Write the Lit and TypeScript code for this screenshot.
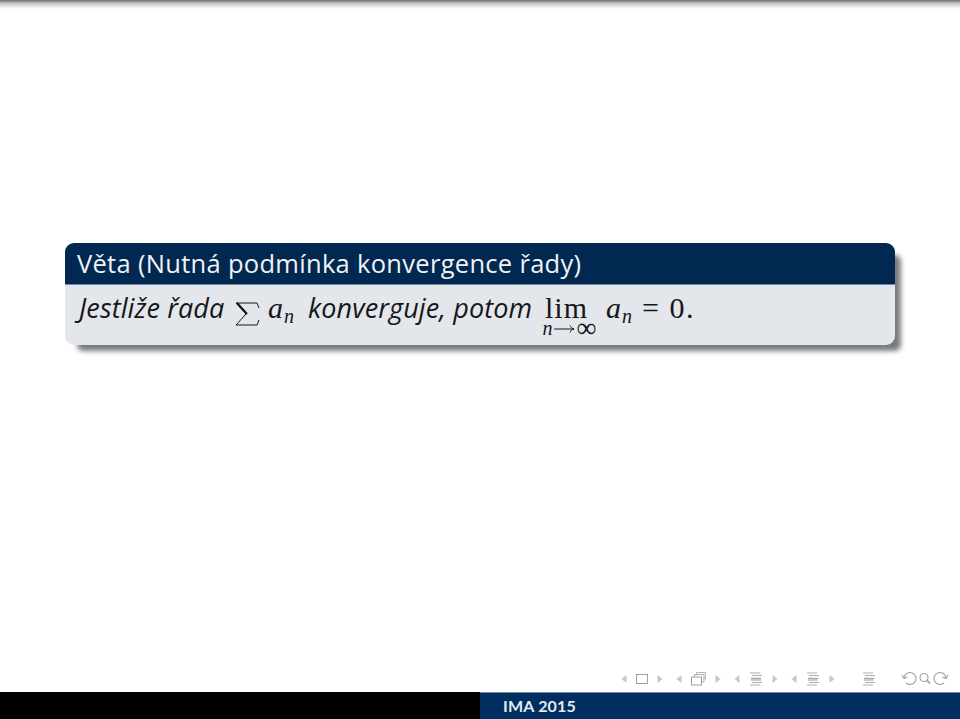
import { LitElement, html, css, svg } from "lit";
import { customElement } from "lit/decorators.js";

const tri = (left: boolean) =>
  svg`<svg class="tri" viewBox="0 0 6 10">${left ? svg`<path d="M5.500 1 .5 5l5 4z"/>` : svg`<path d="M.5 1l5 4-5 4z"/>`}</svg>`;

const lines = svg`<svg class="ico" viewBox="0 0 14 14" fill="none" stroke="#a9adb4" stroke-width="1">
  <path d="M1 1h10M3 3.500h10"/><path d="M2 6.300h10M2 8h10" stroke="#8f949c"/><path d="M3 10.500h10M1 13h10"/>
</svg>`;

const frame = svg`<svg class="fr" viewBox="0 0 12 10" fill="none" stroke="#9a9ea6" stroke-width="1"><rect x=".5" y=".5" width="11" height="9"/></svg>`;

const stack = svg`<svg class="stack" viewBox="0 0 15 14" fill="none" stroke="#9a9ea6" stroke-width="1">
  <path d="M5.500 2.500V.5h9v6.500h-2" stroke="#b5b9bf"/><path d="M3.500 5V2.500h9.500v7.500h-2.500" stroke="#a9adb4"/><rect x=".5" y="5" width="10" height="8" fill="#fff"/>
</svg>`;

const group = (icon: unknown) => html`<span class="grp">${tri(true)}${icon}${tri(false)}</span>`;

@customElement("app-root")
export class AppRoot extends LitElement {
  static styles = css`
    :host { display: block; width: 960px; height: 719px; background: #fff; overflow: hidden; }
    .page { display: flex; flex-direction: column; height: 719px; }
    .shade { height: 9px; flex: none; background: linear-gradient(#6d6f72, #c9cacb 40%, #fff); }
    .main { flex: 1; padding: 234px 65px 0 65px; }
    .block { height: 102px; border-radius: 9px; display: flex; flex-direction: column; background: #e3e6ea; box-shadow: 9px 9px 5px -3px rgba(40, 42, 48, 0.62); }
    .head {
      height: 42px; flex: none; box-sizing: border-box; padding: 5px 0 0 12px; background: #002850; color: #f0f3f6;
      border-radius: 9px 9px 0 0; border-bottom: 1px solid #6f8aa5;
      font: 25.500px/30px "Open Sans", "Noto Sans", sans-serif; letter-spacing: 0.3px; white-space: nowrap;
    }
    .body { display: flex; align-items: baseline; padding: 6px 0 0 12px; height: 50px; box-sizing: border-box; color: #15171a; white-space: nowrap; }
    .t { font: italic 27px/34px "Open Sans", "Noto Sans", sans-serif; }
    .t1 { width: 145px; padding-left: 2px; letter-spacing: 0.1px; }
    .t2 { width: 223px; letter-spacing: 0.1px; }
    .m { font: italic 30px/34px "Liberation Serif", serif; }
    .m sub { font-size: 20px; line-height: 0; vertical-align: -5px; margin-left: 1px; }
    .sum { width: 25px; height: 24px; margin: 0 8px 0 11px; align-self: center; position: relative; top: 1px; }
    .an1 { width: 27px; margin-right: 13px; }
    .lim { display: inline-flex; flex-direction: column; align-items: center; width: 57px; margin: 0 8px 0 10px; }
    .lim .w { font: 30px/34px "Liberation Serif", serif; letter-spacing: 1px; padding-right: 6px; }
    .lim .u { font: italic 20px/16px "Liberation Serif", serif; margin-top: -5px; height: 16px; white-space: nowrap; display: flex; align-items: center; }
    .arrow { width: 21px; height: 10px; margin: 2px 2px 0 1px; }
    .lim .u i { font: 400 28px/16px "Liberation Serif", serif; }
    .an2 { width: 27px; margin-right: 9px; }
    .eq { font: 30px/34px "Liberation Serif", serif; letter-spacing: 1.500px; }
    .nav { flex: none; height: 26px; display: flex; align-items: center; padding: 0 0 0 621px; box-sizing: border-box; }
    .grp { display: inline-flex; align-items: center; gap: 9px; margin-right: 13px; }
    .tri { width: 6px; height: 10px; fill: #c3c6cb; }
    .ico { width: 14px; height: 14px; }
    .fr { width: 12px; height: 10px; }
    .stack { width: 15px; height: 14px; }
    .spacer { width: 14px; }
    .zoom { width: 48px; height: 16px; margin-left: 25px; }
    .foot { flex: none; height: 27px; display: grid; grid-template-columns: 480px 480px; background: #000; }
    .foot .r { background: #002e5e; border-top: 1px solid #6f8aa5; box-sizing: border-box; color: #e4eaf0; padding-left: 23px; font: bold 16px/26px "Lato", "Open Sans", sans-serif; letter-spacing: 0.2px; }
  `;

  render() {
    return html`<div class="page">
      <div class="shade"></div>
      <div class="main">
        <section class="block">
          <div class="head">Věta (Nutná podmínka konvergence řady)</div>
          <div class="body">
            <span class="t t1">Jestliže řada</span>
            <svg class="sum" viewBox="0 0 25 24" fill="none" stroke="#15171a">
              <path d="M1 1h21l2 5M1 1l10 11L1 23h21l2-5" stroke-width="1"/>
              <path d="M2 1l10 11" stroke-width="2"/>
            </svg>
            <span class="m an1">a<sub>n</sub></span>
            <span class="t t2">konverguje, potom</span>
            <span class="lim"><span class="w">lim</span><span class="u">n<svg class="arrow" viewBox="0 0 21 10" fill="none" stroke="#15171a" stroke-width="1"><path d="M0 5h20M16 1.500c.8 1.800 2 3 4 3.500-2 .5-3.200 1.700-4 3.500"/></svg><i>∞</i></span></span>
            <span class="m an2">a<sub>n</sub></span>
            <span class="eq">= 0.</span>
          </div>
        </section>
      </div>
      <div class="nav">
        ${group(frame)}${group(stack)}${group(lines)}${group(lines)}
        <span class="spacer"></span>${lines}
        <svg class="zoom" viewBox="0 0 48 16" fill="none" stroke="#a0a4aa" stroke-width="1.200">
          <path d="M3 7a6 6 0 1 1 2 5M1 4l2 3.500L6.500 6"/>
          <circle cx="23" cy="6.500" r="4"/><path d="M26 9.500l3 3" stroke-width="1.800"/>
          <path d="M45 7a6 6 0 1 0-2 5M47 4l-2 3.500L41.500 6"/>
        </svg>
      </div>
      <div class="foot"><div></div><div class="r">IMA 2015</div></div>
    </div>`;
  }
}
